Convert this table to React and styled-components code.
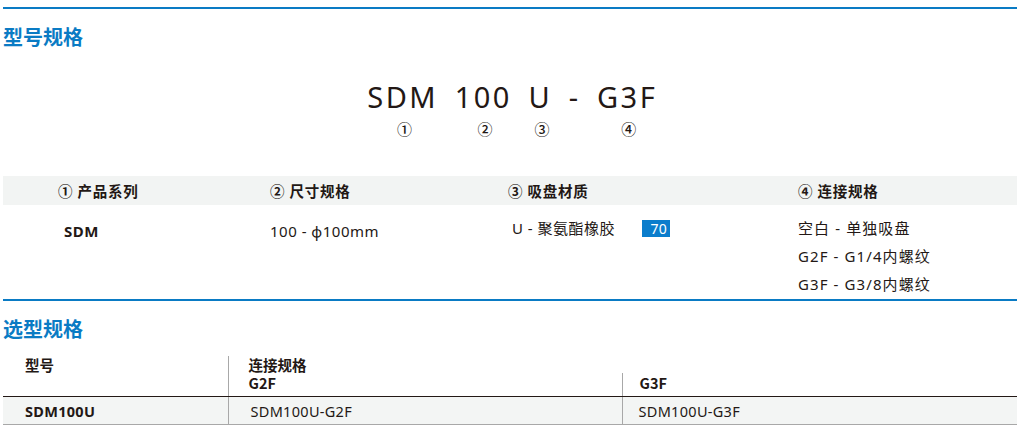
import React from 'react';
import styled, { createGlobalStyle } from 'styled-components';

const blue = '#0a7bc4';
const ink = '#231815';

const GlobalStyle = createGlobalStyle`
  body {
    margin: 0;
    background: #ffffff;
    font-family: "Noto Sans", "Noto Sans CJK SC", sans-serif;
    color: ${ink};
  }
`;

const Page = styled.div`
  width: 1014px;
  padding: 7px 3px 0 3px;
`;

const Rule = styled.div`
  height: 2px;
  background: ${blue};
`;

const SectionTitle = styled.h2`
  margin: 14px 0 0 0;
  font-family: "Noto Sans CJK SC", sans-serif;
  font-size: 20px;
  line-height: 28px;
  font-weight: 700;
  color: ${blue};
`;

const CodeRow = styled.div`
  display: flex;
  justify-content: center;
  gap: 19px;
  margin-top: 29px;
  padding-left: 2px;
`;

const Segment = styled.div`
  display: flex;
  flex-direction: column;
  align-items: center;
`;

const CodeText = styled.span`
  font-size: 29px;
  line-height: 34px;
  letter-spacing: 2.5px;
  margin-right: -2.5px;
`;

const Marker = styled.span`
  margin-top: 6px;
  padding-left: 6px;
  font-family: "Noto Sans CJK SC", sans-serif;
  font-size: 15px;
  font-weight: 500;
  line-height: 18px;
  height: 18px;
`;

const SpecGrid = styled.div`
  display: grid;
  grid-template-columns: 212px 238px 290px 1fr;
  padding-left: 55px;
`;

const HeadBand = styled(SpecGrid)`
  margin-top: 38px;
  height: 29px;
  align-items: center;
  background: #f2f4f3;
  font-family: "Noto Sans CJK SC", sans-serif;
  font-size: 14.5px;
  font-weight: 700;
  letter-spacing: 0.8px;
`;

const BodyGrid = styled(SpecGrid)`
  padding-top: 9px;
  padding-bottom: 1px;
  font-size: 15px;
  line-height: 28px;
  letter-spacing: 0.5px;
`;

const Cell = styled.div`
  padding-top: ${(p) => (p.$low ? 3 : 0)}px;
  padding-left: ${(p) => p.$shift || 0}px;
  font-weight: ${(p) => (p.$bold ? 700 : 400)};
  letter-spacing: ${(p) => (p.$wide ? '1.1px' : 'inherit')};
  display: flex;
  flex-direction: column;
`;

const Line = styled.div`
  display: flex;
  align-items: center;
`;

const Badge = styled.span`
  display: inline-block;
  width: 28px;
  height: 17px;
  line-height: 17px;
  margin-left: 27px;
  padding-right: 3px;
  box-sizing: border-box;
  text-align: right;
  background: #0b7dcc;
  color: #ffffff;
  font-size: 14px;
  letter-spacing: 0.3px;
`;

const Table = styled.table`
  width: 1014px;
  margin-top: 13px;
  border-collapse: collapse;
  table-layout: fixed;
  font-size: 14.5px;
`;

const Th = styled.th`
  text-align: left;
  font-family: "Noto Sans CJK SC", sans-serif;
  font-weight: 700;
  line-height: 16px;
  vertical-align: top;
  padding: ${(p) => p.$top || 0}px 0 ${(p) => p.$bottom || 0}px ${(p) => p.$pad}px;
  border-left: ${(p) => (p.$divider ? '1px solid #a8a8a8' : 'none')};
  border-bottom: ${(p) => (p.$base ? `1.5px solid ${ink}` : 'none')};
`;

const Td = styled.td`
  height: 27px;
  padding: 0 0 0 ${(p) => p.$pad}px;
  background: #f3f5f4;
  font-weight: ${(p) => (p.$bold ? 700 : 400)};
  letter-spacing: 0.3px;
  border-left: ${(p) => (p.$divider ? '1px solid #a8a8a8' : 'none')};
  border-bottom: 1px solid #a8a8a8;
`;

const codeParts = [
  { text: 'SDM', mark: '①' },
  { text: '100', mark: '②' },
  { text: 'U', mark: '③' },
  { text: '-', mark: '' },
  { text: 'G3F', mark: '④' },
];

export default function App() {
  return (
    <Page>
      <GlobalStyle />
      <Rule />
      <SectionTitle>型号规格</SectionTitle>

      <CodeRow>
        {codeParts.map((p, i) => (
          <Segment key={i}>
            <CodeText>{p.text}</CodeText>
            <Marker>{p.mark}</Marker>
          </Segment>
        ))}
      </CodeRow>

      <HeadBand>
        <div>① 产品系列</div>
        <div>② 尺寸规格</div>
        <div>③ 吸盘材质</div>
        <div>④ 连接规格</div>
      </HeadBand>

      <BodyGrid>
        <Cell $low $bold $shift={6}>SDM</Cell>
        <Cell $low>100 - ϕ100mm</Cell>
        <Cell $shift={4}>
          <Line>
            U - 聚氨酯橡胶<Badge>70</Badge>
          </Line>
        </Cell>
        <Cell $wide>
          <Line>空白 - 单独吸盘</Line>
          <Line>G2F - G1/4内螺纹</Line>
          <Line>G3F - G3/8内螺纹</Line>
        </Cell>
      </BodyGrid>

      <Rule />
      <SectionTitle>选型规格</SectionTitle>

      <Table>
        <colgroup>
          <col style={{ width: 225 }} />
          <col style={{ width: 394 }} />
          <col style={{ width: 395 }} />
        </colgroup>
        <thead>
          <tr>
            <Th rowSpan={2} $pad={22} $top={1} $base>型号</Th>
            <Th colSpan={2} $pad={20} $top={1} $divider>连接规格</Th>
          </tr>
          <tr>
            <Th $pad={20} $top={2} $bottom={5} $divider $base>G2F</Th>
            <Th $pad={17} $top={2} $bottom={5} $divider $base>G3F</Th>
          </tr>
        </thead>
        <tbody>
          <tr>
            <Td $pad={22} $bold>SDM100U</Td>
            <Td $pad={22} $divider>SDM100U-G2F</Td>
            <Td $pad={16} $divider>SDM100U-G3F</Td>
          </tr>
        </tbody>
      </Table>
    </Page>
  );
}
